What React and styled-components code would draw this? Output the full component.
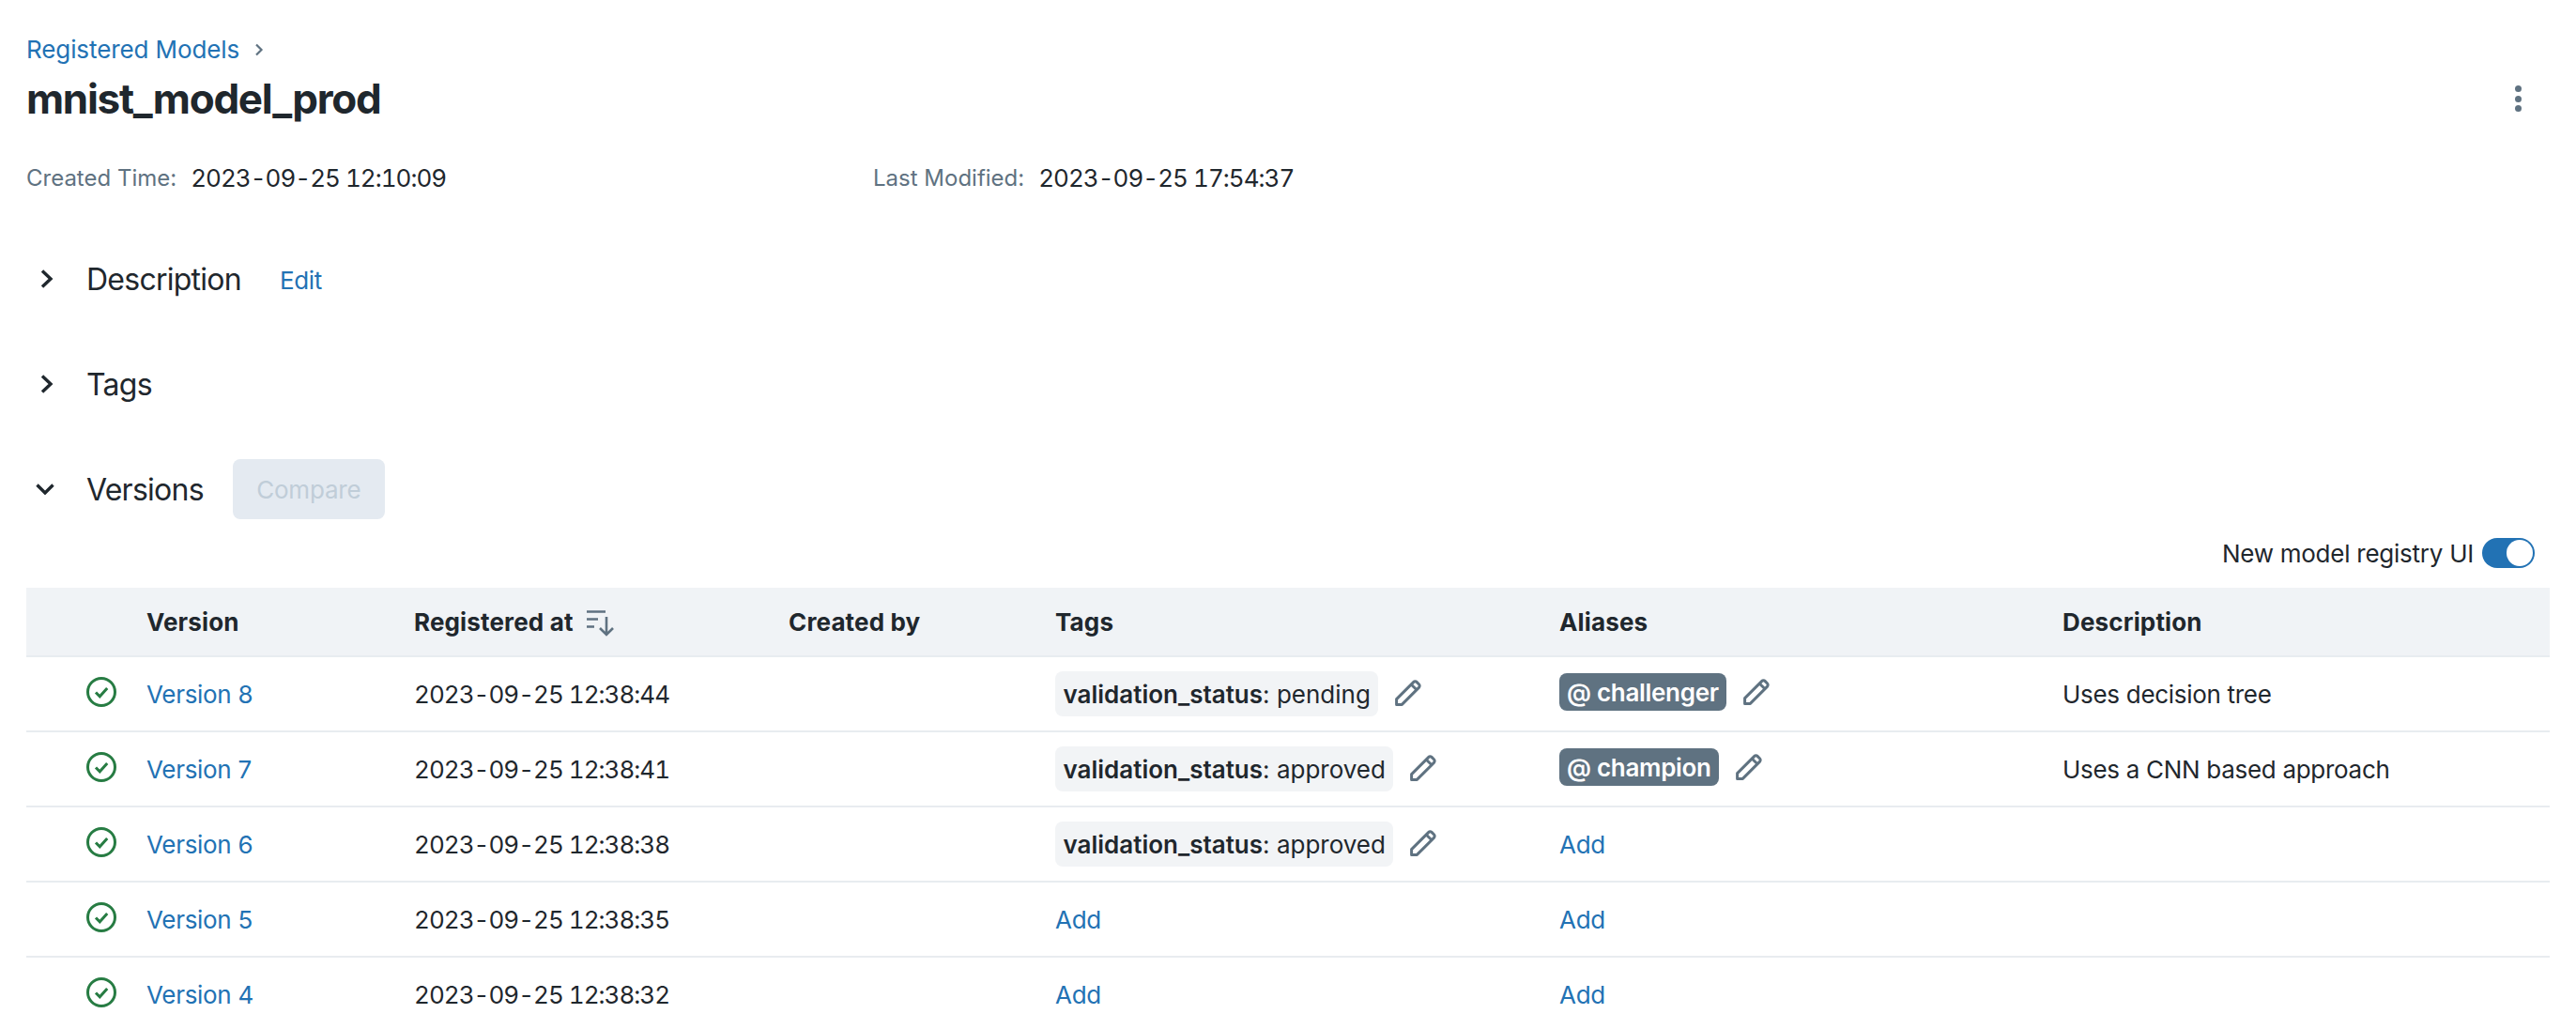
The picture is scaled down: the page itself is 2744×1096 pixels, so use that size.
import React from "react";
import styled, { createGlobalStyle } from "styled-components";

const Global = createGlobalStyle`
  html, body { margin: 0; padding: 0; background: #fff; overflow: hidden; height: 100%; }
  body { font-family: Inter, "Liberation Sans", sans-serif; color: #1f272d; font-size: 26px; }
`;

const Page = styled.div`
  width: 2744px;
  height: 1096px;
  box-sizing: border-box;
  padding: 33px 28px 0;
  overflow: hidden;
`;
const Link = styled.a`
  color: #2272b4;
  font-size: 26px;
  line-height: 40px;
  letter-spacing: -0.3px;
  margin-top: 2px;
`;
const CrumbLink = styled(Link)`
  letter-spacing: -0.1px;
  margin-top: 0;
`;
const EditLink = styled(Link)`
  margin-top: 4px;
`;
const Breadcrumb = styled.nav`
  display: flex;
  align-items: center;
  gap: 16px;
  height: 40px;
  color: #5f7281;
`;
const TitleRow = styled.div`
  display: flex;
  align-items: center;
  justify-content: space-between;
  height: 56px;
  margin-top: 4px;
  padding-right: 30px;
`;
const Title = styled.h1`
  margin: 0;
  font-size: 44px;
  line-height: 56px;
  font-weight: 700;
  letter-spacing: -1.3px;
`;
const Kebab = styled.button`
  display: flex;
  flex-direction: column;
  gap: 3.5px;
  border: 0;
  background: none;
  padding: 0;
  span { width: 7px; height: 7px; border-radius: 50%; background: #5f7281; }
`;
const Meta = styled.dl`
  display: flex;
  margin: 0;
  height: 40px;
  margin-top: 36px;
  align-items: center;
`;
const MetaItem = styled.div`
  width: 902px;
  display: flex;
  align-items: center;
  gap: 15px;
`;
const MetaLabel = styled.dt`
  color: #5f7281;
  font-size: 24px;
`;
const Timestamp = styled.span`
  font-size: 26px;
  font-variant-numeric: tabular-nums;
  letter-spacing: -0.98px;
`;
const MetaValue = styled.dd`
  margin: 0;
`;
const Sections = styled.div`
  display: flex;
  flex-direction: column;
  gap: 48px;
  margin-top: 56px;
`;
const SectionHeader = styled.div`
  height: 64px;
  display: flex;
  align-items: center;
`;
const Toggler = styled.span`
  width: 64px;
  display: flex;
  align-items: center;
  padding-left: ${(p) => (p.$open ? 10 : 15)}px;
  box-sizing: border-box;
`;
const SectionTitle = styled.h2`
  margin: 0;
  font-size: 32px;
  font-weight: 400;
  letter-spacing: -0.75px;
`;
const SectionAction = styled.div`
  margin-left: ${(p) => p.$gap}px;
  display: flex;
  align-items: center;
`;
const CompareButton = styled.button`
  width: 162px;
  height: 64px;
  border: 0;
  border-radius: 8px;
  background: #e4eaf1;
  color: #c0cdd8;
  font: inherit;
  font-size: 26px;
  letter-spacing: -0.2px;
  padding: 0;
`;
const ToggleRow = styled.div`
  display: flex;
  justify-content: flex-end;
  align-items: center;
  gap: 9px;
  height: 32px;
  margin-top: 20px;
  padding-right: 16px;
`;
const ToggleLabel = styled.span`
  font-size: 26px;
  letter-spacing: -0.25px;
`;
const Toggle = styled.span`
  display: flex;
  justify-content: flex-end;
  align-items: center;
  width: 56px;
  height: 32px;
  box-sizing: border-box;
  padding: 2px;
  border-radius: 16px;
  background: #2272b4;
  &::after {
    content: "";
    width: 28px;
    height: 28px;
    border-radius: 50%;
    background: #fff;
  }
`;
const Table = styled.div`
  margin-top: 21px;
`;
const Row = styled.div`
  display: grid;
  grid-template-columns: 128px 285px 399px 284px 537px 536px 1fr;
  align-items: center;
  height: 80px;
  box-sizing: border-box;
  border-bottom: 2px solid #e8ecf0;
`;
const HeadRow = styled(Row)`
  height: 74px;
  background: #f0f3f6;
  font-weight: 700;
`;
const HeadCell = styled.div`
  display: flex;
  align-items: center;
  gap: 8px;
  font-size: 26px;
  letter-spacing: 0.15px;
`;
const SortSlot = styled.span`
  display: inline-flex;
  margin: 4px 0 0 6px;
`;
const Cell = styled.div`
  display: flex;
  align-items: center;
  min-width: 0;
  font-size: 26px;
`;
const DescCell = styled(Cell)`
  letter-spacing: -0.3px;
`;
const StatusCell = styled.div`
  display: flex;
  justify-content: flex-end;
  padding-right: 32px;
  margin-top: -4px;
`;
const Chip = styled.span`
  display: inline-flex;
  align-items: center;
  height: 48px;
  box-sizing: border-box;
  padding: 0 8.5px;
  border-radius: 8px;
  background: #f2f4f6;
  white-space: pre;
  b { font-weight: 600; }
`;
const Alias = styled.span`
  display: inline-flex;
  align-items: center;
  height: 40px;
  box-sizing: border-box;
  padding: 0 8px;
  border-radius: 8px;
  background: #5f7281;
  color: #fff;
  font-weight: 600;
  letter-spacing: -0.3px;
  white-space: nowrap;
  margin-top: -4px;
`;
const Edit = styled.span`
  display: inline-flex;
  margin-left: ${(p) => p.$gap}px;
  margin-top: ${(p) => p.$up}px;
`;

const Chevron = ({ dir }) =>
  dir === "down" ? (
    <svg width="20" height="12" viewBox="0 0 20 12" fill="none" stroke="#1f272d" strokeWidth="3.4">
      <path d="M1.5 1.5 10 10 18.5 1.5" />
    </svg>
  ) : (
    <svg width="14" height="20" viewBox="0 0 14 20" fill="none" stroke="#1f272d" strokeWidth="3.4">
      <path d="M2 1.5 11 10 2 18.5" />
    </svg>
  );
const Crumb = () => (
  <svg width="10" height="14" viewBox="0 0 10 14" fill="none" stroke="#5f7281" strokeWidth="2.2">
    <path d="M2 1.5 7.5 7 2 12.5" />
  </svg>
);
const Check = () => (
  <svg width="32" height="32" viewBox="0 0 32 32" fill="none" stroke="#277c43">
    <circle cx="16" cy="16" r="14.5" strokeWidth="3" />
    <path d="M10 16.5 14.3 20.8 22.2 12" strokeWidth="3" />
  </svg>
);
const Pencil = () => (
  <svg width="28" height="28" viewBox="0 0 28 28" fill="none" stroke="#5f7281" strokeWidth="3" strokeLinejoin="round">
    <path d="M1.6 26.4V20.6L19.6 2.6a2.6 2.6 0 0 1 3.7 0l2.1 2.1a2.6 2.6 0 0 1 0 3.7L7.4 26.4Z" />
    <path d="M17.2 5 23 10.8" />
  </svg>
);
const SortIcon = () => (
  <svg width="30" height="28" viewBox="0 0 30 28" fill="none" stroke="#5f7281" strokeWidth="2.6">
    <path d="M0 1.5H20M0 9.5H12M0 17.5H8" />
    <path d="M21 7V26M14 19 21 26 28 19" />
  </svg>
);

const versions = [
  { n: 8, at: "12:38:44", tag: "pending", alias: "challenger", desc: "Uses decision tree" },
  { n: 7, at: "12:38:41", tag: "approved", alias: "champion", desc: "Uses a CNN based approach" },
  { n: 6, at: "12:38:38", tag: "approved" },
  { n: 5, at: "12:38:35" },
  { n: 4, at: "12:38:32" },
];

export default function App() {
  return (
    <Page>
      <Global />
      <Breadcrumb>
        <CrumbLink>Registered Models</CrumbLink>
        <Crumb />
      </Breadcrumb>
      <TitleRow>
        <Title>mnist_model_prod</Title>
        <Kebab aria-label="More">
          <span />
          <span />
          <span />
        </Kebab>
      </TitleRow>
      <Meta>
        <MetaItem>
          <MetaLabel>Created Time:</MetaLabel>
          <MetaValue><Timestamp>2023-09-25 12:10:09</Timestamp></MetaValue>
        </MetaItem>
        <MetaItem>
          <MetaLabel>Last Modified:</MetaLabel>
          <MetaValue><Timestamp>2023-09-25 17:54:37</Timestamp></MetaValue>
        </MetaItem>
      </Meta>
      <Sections>
        <SectionHeader>
          <Toggler><Chevron /></Toggler>
          <SectionTitle>Description</SectionTitle>
          <SectionAction $gap={41}><EditLink>Edit</EditLink></SectionAction>
        </SectionHeader>
        <SectionHeader>
          <Toggler><Chevron /></Toggler>
          <SectionTitle>Tags</SectionTitle>
        </SectionHeader>
        <SectionHeader>
          <Toggler $open><Chevron dir="down" /></Toggler>
          <SectionTitle>Versions</SectionTitle>
          <SectionAction $gap={31}><CompareButton disabled>Compare</CompareButton></SectionAction>
        </SectionHeader>
      </Sections>
      <ToggleRow>
        <ToggleLabel>New model registry UI</ToggleLabel>
        <Toggle />
      </ToggleRow>
      <Table>
        <HeadRow>
          <HeadCell />
          <HeadCell>Version</HeadCell>
          <HeadCell>Registered at <SortSlot><SortIcon /></SortSlot></HeadCell>
          <HeadCell>Created by</HeadCell>
          <HeadCell>Tags</HeadCell>
          <HeadCell>Aliases</HeadCell>
          <HeadCell>Description</HeadCell>
        </HeadRow>
        {versions.map((v) => (
          <Row key={v.n}>
            <StatusCell><Check /></StatusCell>
            <Cell><Link>Version {v.n}</Link></Cell>
            <Cell><Timestamp>2023-09-25 {v.at}</Timestamp></Cell>
            <Cell />
            <Cell>
              {v.tag ? (
                <>
                  <Chip><b>validation_status</b>: {v.tag}</Chip>
                  <Edit $gap={18} $up={-2}><Pencil /></Edit>
                </>
              ) : (
                <Link>Add</Link>
              )}
            </Cell>
            <Cell>
              {v.alias ? (
                <>
                  <Alias>@ {v.alias}</Alias>
                  <Edit $gap={18} $up={-4}><Pencil /></Edit>
                </>
              ) : (
                <Link>Add</Link>
              )}
            </Cell>
            <DescCell>{v.desc}</DescCell>
          </Row>
        ))}
      </Table>
    </Page>
  );
}
